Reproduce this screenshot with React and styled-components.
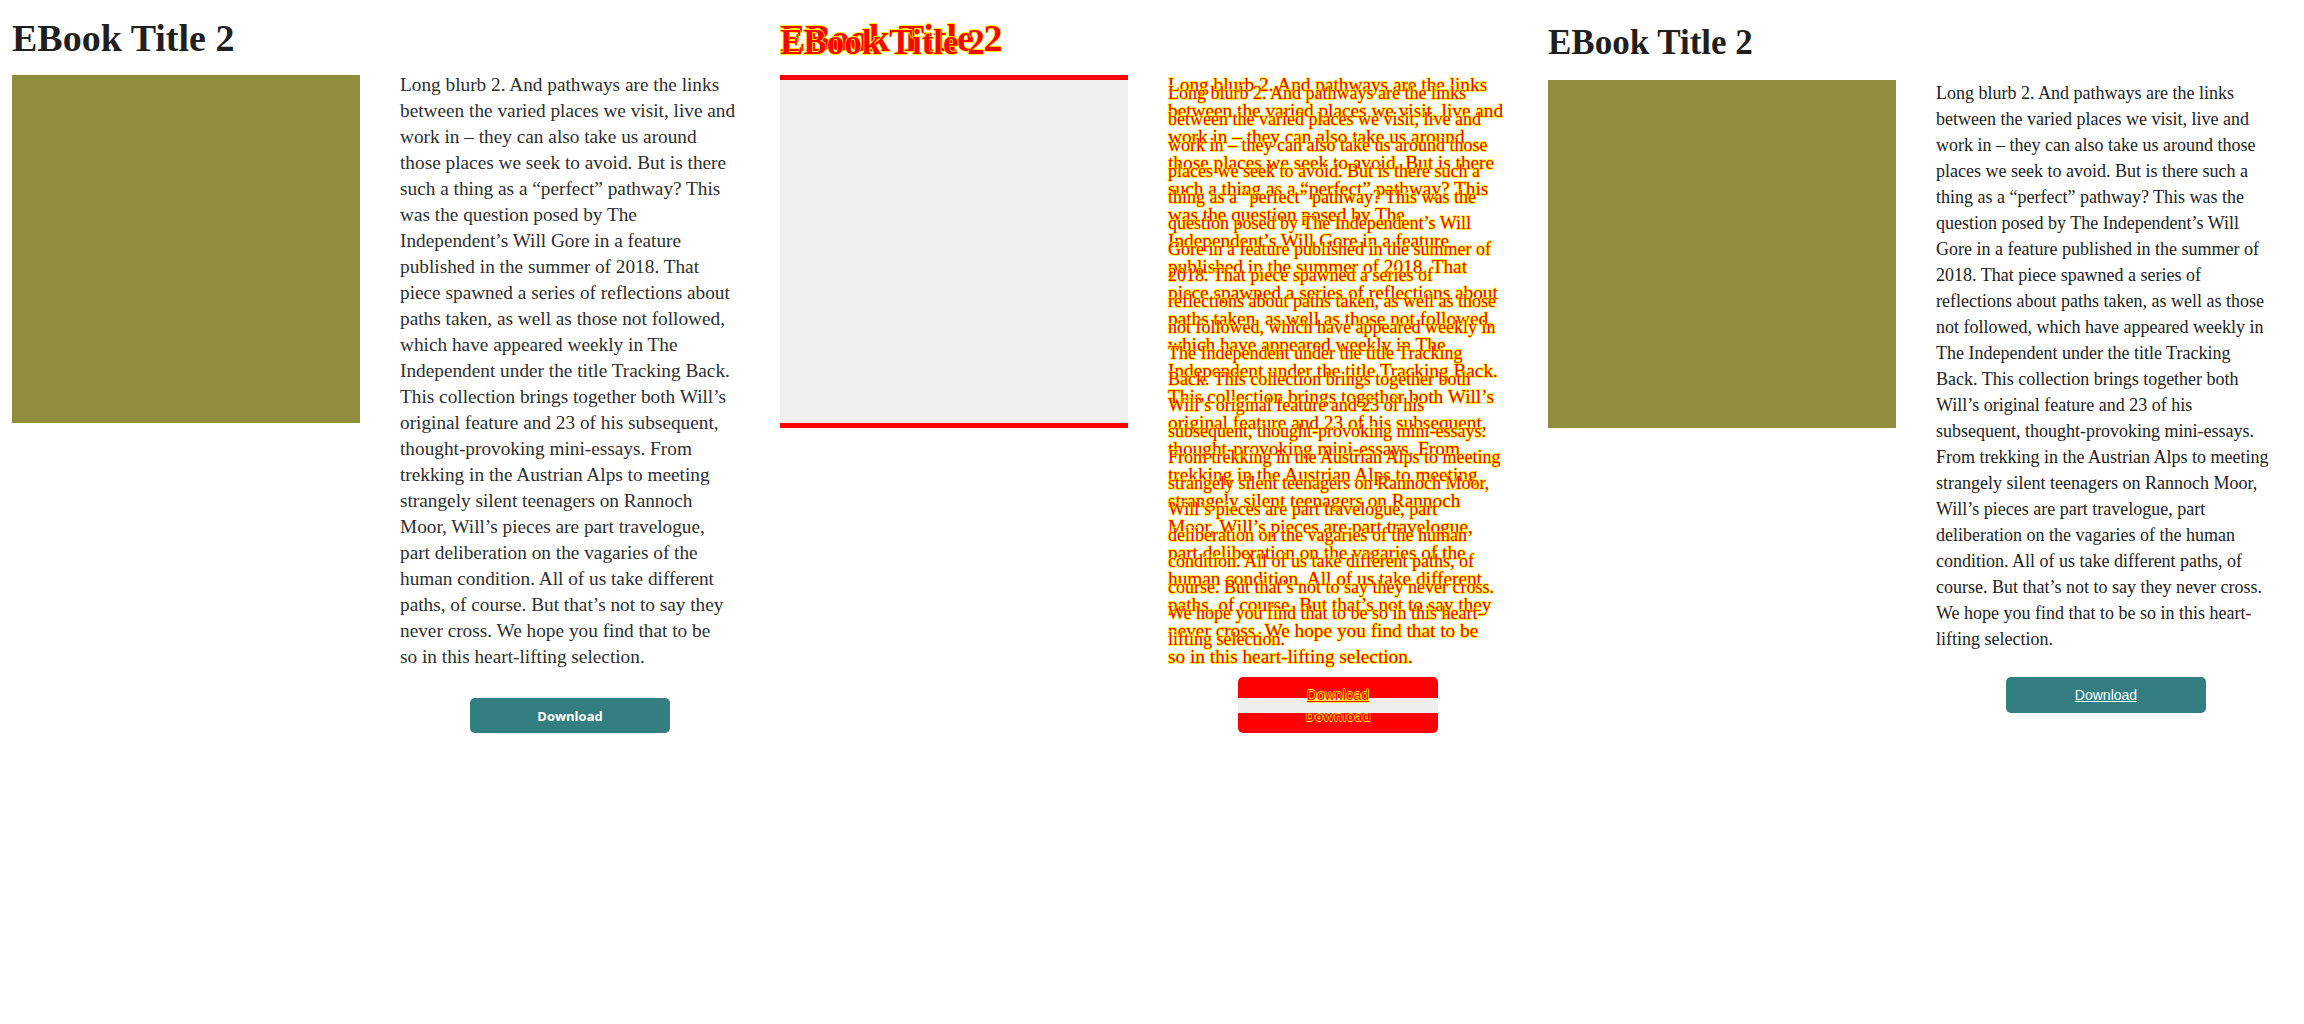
import React from "react";
import styled, { createGlobalStyle, css } from "styled-components";

const GlobalStyle = createGlobalStyle`
  html, body {
    margin: 0;
    padding: 0;
    background: #ffffff;
  }
`;

// line breaks as they fall in the original page
const BLURB_LINES = [
  "Long blurb 2. And pathways are the links",
  "between the varied places we visit, live and",
  "work in – they can also take us around",
  "those places we seek to avoid. But is there",
  "such a thing as a “perfect” pathway? This",
  "was the question posed by The",
  "Independent’s Will Gore in a feature",
  "published in the summer of 2018. That",
  "piece spawned a series of reflections about",
  "paths taken, as well as those not followed,",
  "which have appeared weekly in The",
  "Independent under the title Tracking Back.",
  "This collection brings together both Will’s",
  "original feature and 23 of his subsequent,",
  "thought-provoking mini-essays. From",
  "trekking in the Austrian Alps to meeting",
  "strangely silent teenagers on Rannoch",
  "Moor, Will’s pieces are part travelogue,",
  "part deliberation on the vagaries of the",
  "human condition. All of us take different",
  "paths, of course. But that’s not to say they",
  "never cross. We hope you find that to be",
  "so in this heart-lifting selection.",
];

const BLURB = BLURB_LINES.join(" ");

const variants = {
  original: {
    top: 18,
    titleSize: 38,
    titleGap: 17,
    bodySize: 19.3,
    bodyShift: -3,
    buttonGap: 28,
    buttonHeight: 35,
  },
  render: {
    top: 23,
    titleSize: 35,
    titleGap: 17,
    bodySize: 18,
    bodyShift: 0,
    buttonGap: 25,
    buttonHeight: 36,
  },
};

const diffInk = css`
  color: #ff0000;
  text-shadow: 0.6px 0 0.4px #ffff00, -0.6px 0 0.4px #ffff00,
    0 0.6px 0.4px #ffff00, 0 -0.6px 0.4px #ffff00;
`;

const Stage = styled.main`
  display: flex;
  width: 2304px;
  min-height: 1024px;
  background: #ffffff;
`;

const Panel = styled.section`
  position: relative;
  width: 768px;
  flex: 0 0 768px;
`;

const Overlay = styled.div`
  position: absolute;
  inset: 0;
`;

const Card = styled.article`
  box-sizing: border-box;
  padding: ${({ $v }) => variants[$v].top}px 12px 0;
`;

const Title = styled.h1`
  margin: 0 0 ${({ $v }) => variants[$v].titleGap}px;
  font-family: "Liberation Serif", "Times New Roman", serif;
  font-weight: 700;
  font-size: ${({ $v }) => variants[$v].titleSize}px;
  line-height: 40px;
  color: #1f1f1f;
  ${({ $tone }) => $tone !== "plain" && diffInk}
`;

const Body = styled.div`
  display: grid;
  grid-template-columns: 348px 340px;
  column-gap: 40px;
  align-items: start;
`;

const Cover = styled.div`
  width: 348px;
  height: 348px;
  background: #8f8e3c;
  ${({ $tone }) =>
    $tone === "diffA" &&
    css`
      background: linear-gradient(#ff0000 0 5px, #f0f0f0 5px 100%);
    `}
  ${({ $tone }) =>
    $tone === "diffB" &&
    css`
      background: linear-gradient(#f0f0f0 0 343px, #ff0000 343px 100%);
    `}
`;

const Details = styled.div`
  display: flex;
  flex-direction: column;
  align-items: center;
  margin-top: ${({ $v }) => variants[$v].bodyShift}px;
`;

const Blurb = styled.p`
  width: 100%;
  margin: 0;
  font-family: "Liberation Serif", "Times New Roman", serif;
  font-size: ${({ $v }) => variants[$v].bodySize}px;
  line-height: 26px;
  color: ${({ $v }) => ($v === "original" ? "#2e2e2e" : "#222222")};
  white-space: ${({ $v }) => ($v === "original" ? "pre" : "normal")};
  ${({ $tone }) => $tone !== "plain" && diffInk}
`;

const DownloadButton = styled.a`
  display: flex;
  align-items: center;
  justify-content: center;
  box-sizing: border-box;
  width: 200px;
  height: ${({ $v }) => variants[$v].buttonHeight}px;
  margin-top: ${({ $v }) => variants[$v].buttonGap}px;
  border-radius: 5px;
  background: #337e80;
  color: #ffffff;
  cursor: pointer;
  ${({ $v }) =>
    $v === "original"
      ? css`
          font-family: "Open Sans", "Liberation Sans", sans-serif;
          font-weight: 700;
          font-size: 13px;
          text-decoration: none;
        `
      : css`
          font-family: "Liberation Sans", Arial, sans-serif;
          font-weight: 400;
          font-size: 14px;
          text-decoration: underline;
        `}
  ${({ $tone }) =>
    $tone === "diffA" &&
    css`
      background: linear-gradient(#eeeeee 0 15px, #ff0000 15px 100%);
    `}
  ${({ $tone }) =>
    $tone === "diffB" &&
    css`
      background: linear-gradient(#ff0000 0 21px, #eeeeee 21px 100%);
    `}
  ${({ $tone }) => $tone !== "plain" && diffInk}
`;

const EbookCard = ({ variant, tone = "plain" }) => (
  <Card $v={variant}>
    <Title $v={variant} $tone={tone}>
      EBook Title 2
    </Title>
    <Body>
      <Cover $tone={tone} />
      <Details $v={variant}>
        <Blurb $v={variant} $tone={tone}>
          {variant === "original" ? BLURB_LINES.join("\n") : BLURB}
        </Blurb>
        <DownloadButton $v={variant} $tone={tone}>
          Download
        </DownloadButton>
      </Details>
    </Body>
  </Card>
);

const App = () => {
  return (
    <>
      <GlobalStyle />
      <Stage>
        <Panel>
          <EbookCard variant="original" />
        </Panel>

        {/* difference of the two renders */}
        <Panel>
          <EbookCard variant="original" tone="diffA" />
          <Overlay>
            <EbookCard variant="render" tone="diffB" />
          </Overlay>
        </Panel>

        <Panel>
          <EbookCard variant="render" />
        </Panel>
      </Stage>
    </>
  );
};

export default App;
